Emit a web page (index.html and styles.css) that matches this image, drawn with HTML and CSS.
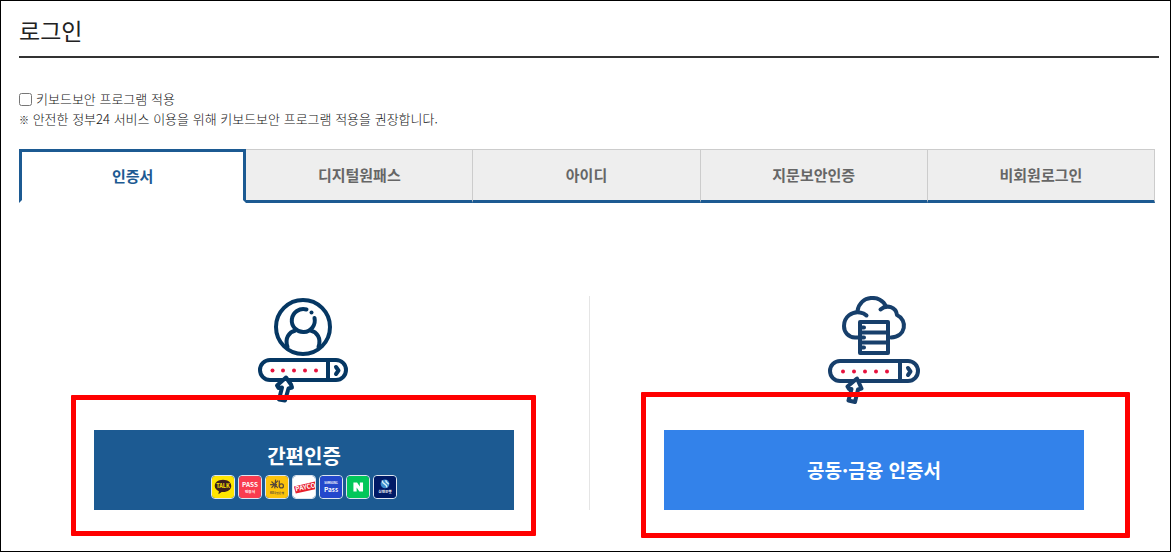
FILE: index.html
```html
<!DOCTYPE html>
<html lang="ko">
<head>
	<meta charset="utf-8">
	<title>로그인</title>
	<meta name="viewport" content="width=device-width">
	<link rel="stylesheet" href="styles.css">
</head>
<body>
	<div class="page">
		<h1 class="title">로그인</h1>
		<div class="security">
			<div class="check">
				<input type="checkbox" id="keysec">
				<label for="keysec">키보드보안 프로그램 적용</label>
			</div>
			<p><span class="ref">※</span> 안전한 정부24 서비스 이용을 위해 키보드보안 프로그램 적용을 권장합니다.</p>
		</div>
		<div class="tabs">
			<button type="button" class="tab active">인증서</button>
			<button type="button" class="tab">디지털원패스</button>
			<button type="button" class="tab">아이디</button>
			<button type="button" class="tab">지문보안인증</button>
			<button type="button" class="tab">비회원로그인</button>
		</div>
		<div class="methods">
			<div class="method">
				<svg class="picto user" width="92" height="108" viewBox="0 0 92 108" aria-hidden="true">
					<circle cx="45" cy="31" r="27"/>
					<path d="M29.500 51C26.500 42 31 36 37.500 34.500M60.500 51C63.500 42 59 36 52.500 34.500"/>
					<path d="M48.500 13.500A11.500 11.500 0 1 0 56.500 22"/>
					<circle class="spot" cx="53.500" cy="16.500" r="2"/>
					<rect x="2" y="64" width="86" height="20" rx="10"/>
					<path d="M70 64V84"/>
					<path class="chev" d="M78 71L80.500 74.500L78 78"/>
					<g class="dots">
						<circle cx="14.500" cy="74.500" r="2"/><circle cx="25" cy="74.500" r="2"/><circle cx="36" cy="74.500" r="2"/><circle cx="47" cy="74.500" r="2"/><circle cx="58" cy="74.500" r="2"/>
					</g>
					<path class="cursor" d="M28 81.500L19 89.500L20.500 92L24 91.500L21 103.500L27 104.500L30.500 92.500L34 91.500L33 88.500Z"/>
				</svg>
				<div class="action">
					<button type="button" class="btn simple">
						<span>간편인증</span>
						<span class="brands" aria-hidden="true">
							<svg class="brand" viewBox="0 0 24 24">
								<rect width="24" height="24" rx="3" fill="#ffe500"/>
								<path d="M12 4C6.500 4 3 7 3 11C3 13.500 5 15.700 7.500 16.500L7 20L10.500 17.500C17 18 21 15 21 11C21 7 17.500 4 12 4Z" fill="#3b1e1e"/>
								<text x="12" y="13.200" font-size="6" fill="#ffe500">TALK</text>
							</svg>
							<svg class="brand" viewBox="0 0 24 24">
								<rect width="24" height="24" rx="3" fill="#f93c4f"/>
								<text x="12" y="12" font-size="7" fill="#fff">PASS</text>
								<text x="12" y="19" font-size="4" fill="#fff">인증서</text>
							</svg>
							<svg class="brand" viewBox="0 0 24 24">
								<rect width="24" height="24" rx="3" fill="#fdc30b"/>
								<path d="M6 6L13 13M13 5L6 13M4.500 9.500H12M10.500 4L9.500 13.500M14.500 5V12" fill="none" stroke="#55483a" stroke-width="1.300"/>
								<circle cx="16.800" cy="10.800" r="2.200" fill="none" stroke="#55483a" stroke-width="1.300"/>
								<text x="12" y="20" font-size="3" fill="#55483a">KB국민은행</text>
							</svg>
							<svg class="brand" viewBox="0 0 24 24">
								<rect width="24" height="24" rx="3" fill="#fff"/>
								<path d="M1 11.500L24 6V14.500L3 19Z" fill="#e8202d"/>
								<text x="13.500" y="14.700" font-size="7" fill="#fff" transform="rotate(-11 13 12)">PAYCO</text>
							</svg>
							<svg class="brand" viewBox="0 0 24 24">
								<rect width="24" height="24" rx="3" fill="#2448cc"/>
								<text x="12" y="9" font-size="3" fill="#fff">SAMSUNG</text>
								<text x="12" y="17" font-size="7" fill="#fff">Pass</text>
							</svg>
							<svg class="brand" viewBox="0 0 24 24">
								<rect width="24" height="24" rx="3" fill="#03c75a"/>
								<path d="M7 7H11L14 11.500V7H17.500V17H13.500L10.500 12.500V17H7Z" fill="#fff"/>
							</svg>
							<svg class="brand" viewBox="0 0 24 24">
								<rect width="24" height="24" rx="3" fill="#001a66"/>
								<circle cx="12" cy="8.500" r="4.800" fill="#3b8fd0"/>
								<path d="M9 5C9 10 14.500 8 14 12.500M13 4.500C12.500 7 15 7.500 16 9" fill="none" stroke="#d7f0f4" stroke-width="1.500"/>
								<text x="12" y="19" font-size="4" fill="#fff">신한은행</text>
							</svg>
						</span>
					</button>
					<div class="mark mark-simple"></div>
				</div>
			</div>
			<div class="method">
				<svg class="picto cloud" width="92" height="108" viewBox="0 0 92 108" aria-hidden="true">
					<path d="M31 41.500H27C20 41 16 36 16 30C16 21 24 15 32 16.500Q36 17 38.500 19.500"/>
					<path d="M29.500 15C32 -1 53 -2 58 10.500"/>
					<path d="M52.500 13.500C59 8 68 11 69 19C80 24 78 41 63 41.500"/>
					<rect x="32" y="26" width="28" height="31"/>
					<path d="M32 36.500H60M32 46.500H60"/>
					<path class="chev" d="M33 31.500H36M33 41.500H36M33 51.500H36"/>
					<rect x="2" y="65" width="88" height="20" rx="10"/>
					<path d="M72 65V85"/>
					<path class="chev" d="M80 72L82.500 75.500L80 79"/>
					<g class="dots">
						<circle cx="15" cy="75.500" r="2"/><circle cx="26" cy="75.500" r="2"/><circle cx="37" cy="75.500" r="2"/><circle cx="48" cy="75.500" r="2"/><circle cx="59" cy="75.500" r="2"/>
					</g>
					<path class="cursor" d="M29 82.500L19.500 90.500L21 93L23.500 93L20.500 104.500L27 106L30 93.500L33.500 92.500Z"/>
				</svg>
				<div class="action">
					<button type="button" class="btn joint">공동·금융 인증서</button>
					<div class="mark mark-joint"></div>
				</div>
			</div>
		</div>
	</div>
</body>
</html>
```

FILE: styles.css
```css
* {
	box-sizing: border-box;
	font-family: "Noto Sans CJK KR", sans-serif;
}
body {
	margin: 0;
	color: #222;
	background-color: white;
}
.page {
	min-height: 100vh;
	padding: 9px 11px 40px 18px;
	border: 1px solid black;
}
.title {
	margin: 0 0 31px;
	padding-bottom: 6px;
	border-bottom: 2px solid #333;
	font-size: 23px;
	font-weight: 400;
	line-height: 40px;
}
/* keyboard security option */
.security {
	margin-bottom: 20px;
	color: #111;
	font-size: 13px;
	font-weight: 300;
	line-height: 20px;
}
.security p {
	margin: 0;
}
.ref {
	font-size: 10px;
	line-height: 1;
}
.check {
	display: flex;
	align-items: center;
	gap: 4px;
}
.check input {
	width: 13px;
	height: 13px;
	margin: 0;
}
/* tabs */
.tabs {
	display: grid;
	grid-template-columns: repeat(5, 1fr);
	margin-right: 4px;
	margin-bottom: 93px;
}
.tab {
	height: 54px;
	padding: 0 0 2px;
	border: 1px solid #ccc;
	border-left: 0;
	border-bottom: 3px solid #1c5a92;
	background-color: #eee;
	color: #666;
	font-size: 15px;
	font-weight: 700;
}
.tab.active {
	border: 3px solid #1c5a92;
	border-bottom-color: white;
	background-color: white;
	color: #1c5a92;
}
/* login methods */
.methods {
	display: grid;
	grid-template-columns: 1fr 1fr;
}
.method {
	display: flex;
	flex-direction: column;
	align-items: center;
	gap: 26px;
}
.method + .method {
	box-shadow: inset 1px 0 #e5e5e5;
}
.picto {
	fill: none;
	stroke: #053763;
	stroke-width: 4;
	stroke-linecap: round;
	stroke-linejoin: round;
}
.cloud {
	stroke: #173f6b;
}
.picto .spot {
	fill: #053763;
	stroke: none;
}
.picto .dots {
	fill: #e6123d;
	stroke: none;
}
.picto .cursor {
	fill: white;
}
.action {
	position: relative;
	width: 100%;
	max-width: 420px;
}
.btn {
	display: flex;
	flex-direction: column;
	align-items: center;
	justify-content: center;
	gap: 5px;
	width: 100%;
	height: 80px;
	padding: 0;
	border: 0;
	color: white;
	font-size: 20px;
	font-weight: 700;
	line-height: 28px;
}
.simple {
	background-color: #1c5a92;
}
.joint {
	background-color: #3382ea;
	font-size: 19px;
}
.brands {
	display: flex;
	gap: 3px;
}
.brand {
	width: 24px;
	height: 24px;
	border: 1px solid #dde6f0;
	border-radius: 4px;
	text-anchor: middle;
	font-weight: 700;
}
/* red frames round the buttons */
.mark {
	position: absolute;
	border: 5px solid red;
	border-radius: 1px;
	pointer-events: none;
}
.mark-simple {
	inset: -35px -22px -26px -23px;
}
.mark-joint {
	inset: -38px -46px -28px -23px;
}
```
